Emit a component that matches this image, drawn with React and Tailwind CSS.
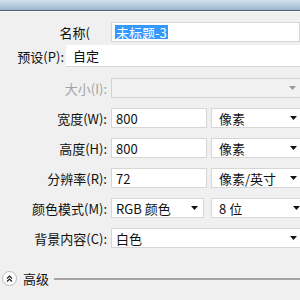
import React from "react";

const Arrow = ({ gray }) => (
  <svg width="7" height="4" viewBox="0 0 7 4" className="shrink-0">
    <path d="M0 0h7L3.5 4z" fill={gray ? "#9a9a9a" : "#111"} />
  </svg>
);

function Field({ children, className = "" }) {
  return (
    <div className={`h-[20px] bg-white border border-[#d6d6d6] flex items-center pl-[4px] ${className}`}>
      {children}
    </div>
  );
}

function Select({ value, className = "" }) {
  return (
    <div className={`h-[20px] bg-white border border-[#d6d6d6] flex items-center justify-between pl-[7px] pr-[5px] ${className}`}>
      <span>{value}</span>
      <Arrow />
    </div>
  );
}

function Row({ label, children, className = "" }) {
  return (
    <div className={`flex items-center ${className}`}>
      <div className="w-[108px] shrink-0 text-right pr-[1px]">{label}</div>
      <div className="flex items-center gap-[4px] ml-[3px] shrink-0">{children}</div>
    </div>
  );
}

export default function App() {
  return (
    <div className="w-[300px] h-[300px] overflow-hidden bg-[#f0f0f0] text-[13px] leading-none text-[#111] font-['Noto_Sans_CJK_SC',sans-serif]">
      {/* window title strip */}
      <div className="h-[11px] bg-gradient-to-b from-[#d3e2ef] via-[#b7cde0] to-[#9db6cc] border-b border-[#4e6073]" />
      <div className="h-px bg-[#fafafa]" />

      {/* 名称 */}
      <div className="flex items-center mt-[10px]">
        <div className="w-[90px] shrink-0 text-right">名称(</div>
        <div className="ml-[21px] w-[200px] h-[20px] bg-white border border-[#d6d6d6] flex items-center pl-[3px]">
          <span className="bg-[#3399ff] text-white px-[1px] h-[14px] flex items-center">未标题-3</span>
        </div>
      </div>

      {/* 预设 */}
      <div className="flex items-center mt-[3px]">
        <div className="w-[64px] shrink-0 text-right">预设(P):</div>
        <div className="ml-[2px] w-[240px] h-[22px] bg-white border-b border-[#d6d6d6] flex items-center pl-[7px]">
          自定
        </div>
      </div>

      {/* 大小 */}
      <Row label={<span className="text-[#a3a3a3]">大小(I):</span>} className="mt-[11px]">
        <div className="w-[192px] h-[20px] bg-[#f2f2f2] border border-[#d2d2d2] flex items-center justify-end pr-[6px]">
          <Arrow gray />
        </div>
      </Row>

      <Row label="宽度(W):" className="mt-[10px]">
        <Field className="w-[96px]">800</Field>
        <Select value="像素" className="w-[92px]" />
      </Row>

      <Row label="高度(H):" className="mt-[10px]">
        <Field className="w-[96px]">800</Field>
        <Select value="像素" className="w-[92px]" />
      </Row>

      <Row label="分辨率(R):" className="mt-[10px]">
        <Field className="w-[96px]">72</Field>
        <Select value="像素/英寸" className="w-[92px]" />
      </Row>

      <Row label="颜色模式(M):" className="mt-[10px]">
        <Select value="RGB 颜色" className="w-[93px] pl-[4px]!" />
        <Select value="8 位" className="w-[95px] ml-[3px]" />
      </Row>

      <Row label="背景内容(C):" className="mt-[10px]">
        <Select value="白色" className="w-[192px] pl-[4px]!" />
      </Row>

      {/* 高级 */}
      <div className="flex items-center mt-[23px] pl-[2px]">
        <div className="w-[15px] h-[15px] shrink-0 rounded-full bg-white border border-[#b9b9b9] flex items-center justify-center">
          <svg width="7" height="7" viewBox="0 0 7 7">
            <path d="M1 3.5L3.5 1L6 3.5M1 6.5L3.5 4L6 6.5" fill="none" stroke="#222" strokeWidth="1.2" />
          </svg>
        </div>
        <span className="ml-[6px] shrink-0">高级</span>
        <div className="flex-1 ml-[5px] h-[2px] bg-[#a2a2a2]" />
      </div>
    </div>
  );
}
